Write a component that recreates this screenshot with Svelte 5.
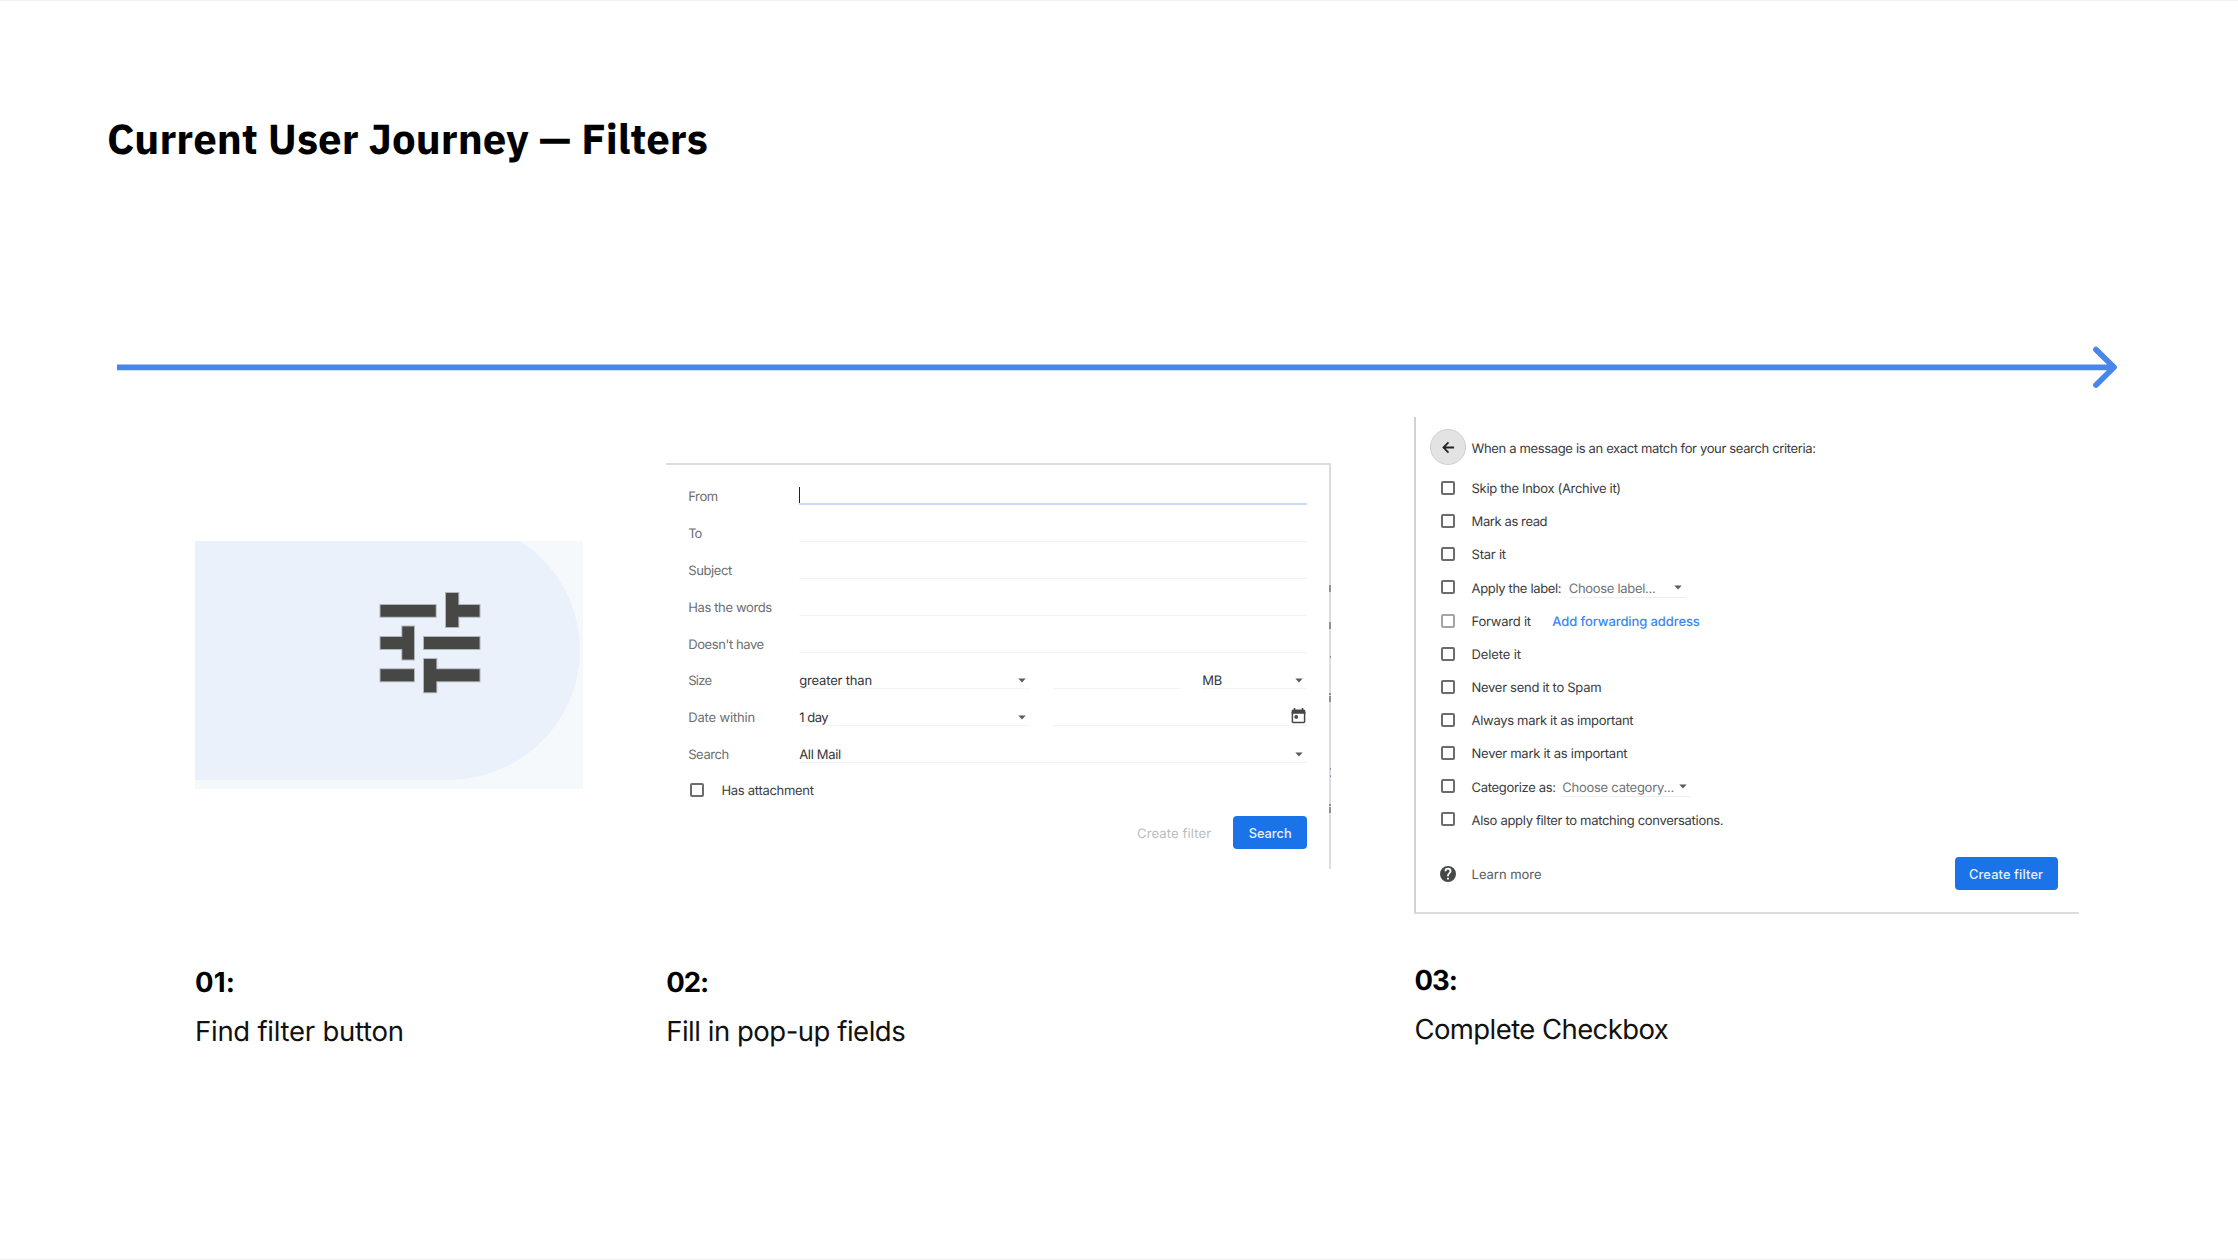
<script>
  // Spreads a line of text over a given width by adjusting its tracking.
  function fit(node, width) {
    const range = document.createRange();
    range.selectNodeContents(node);
    const natural = range.getBoundingClientRect().width;
    const gaps = node.textContent.length - 1;
    if (gaps > 0) node.style.letterSpacing = `${(width - natural) / gaps}px`;
  }

  const searchRows = [
    { label: 'From', w: 30, focus: true },
    { label: 'To', w: 14 },
    { label: 'Subject', w: 44 },
    { label: 'Has the words', w: 84 },
    { label: "Doesn't have", w: 76 },
    { label: 'Size', w: 24, value: 'greater than', vw: 73, kind: 'size' },
    { label: 'Date within', w: 67, value: '1 day', vw: 29.5, kind: 'date' },
    { label: 'Search', w: 41, value: 'All Mail', vw: 42, kind: 'scope' }
  ];

  const actions = [
    { text: 'Skip the Inbox (Archive it)', w: 149.5 },
    { text: 'Mark as read', w: 76 },
    { text: 'Star it', w: 34.5 },
    { text: 'Apply the label:', w: 90, choice: 'Choose label...', cw: 87, kind: 'label' },
    { text: 'Forward it', w: 59.5, link: 'Add forwarding address', lw: 147.5, off: true },
    { text: 'Delete it', w: 49.5 },
    { text: 'Never send it to Spam', w: 130 },
    { text: 'Always mark it as important', w: 162 },
    { text: 'Never mark it as important', w: 156 },
    { text: 'Categorize as:', w: 84.5, choice: 'Choose category...', cw: 112, kind: 'category' },
    { text: 'Also apply filter to matching conversations.', w: 252 }
  ];
</script>

{#snippet caret()}
  <svg class="caret" viewBox="0 0 8 5"><path d="M0.3 0.4h7.4L4 4.6z" /></svg>
{/snippet}

<main>
  <h1><span use:fit={601}>Current User Journey — Filters</span></h1>

  <svg class="timeline" viewBox="0 0 2004 48">
    <path d="M0 24.3H1996M1979 6.600L1997 24.300L1979 42" />
  </svg>

  <div class="steps">
    <section class="step">
      <div class="figure">
        <div class="crop">
          <div class="pill"></div>
          <svg class="tune" viewBox="0 0 388 248">
            <path d="M185.500 64h55.200v11.700h-55.200zM251 52h12.300v12h21.200v11.700h-21.200V86H251zM207.300 85.500H219v33h-11.700V108h-21.800V96h21.800zM229 96h55.500v12H229zM185.500 128.300H219v12h-33.500zM229 118h12.300v10.300h43.200v12h-43.200v11H229z" />
          </svg>
        </div>
      </div>
      <h2><span use:fit={40}>01:</span></h2>
      <p><span use:fit={209}>Find filter button</span></p>
    </section>

    <section class="step">
      <div class="figure">
        <div class="card search">
          {#each searchRows as row}
            <div class="row {row.kind ?? 'text'}">
              <span class="name"><span use:fit={row.w}>{row.label}</span></span>
              <div class="field main" class:focus={row.focus}>
                {#if row.focus}<i class="cursor"></i>{/if}
                {#if row.value}
                  <span use:fit={row.vw}>{row.value}</span>
                  {@render caret()}
                {/if}
              </div>
              {#if row.kind === 'size'}
                <div class="field amount"></div>
                <div class="field unit"><span use:fit={20}>MB</span>{@render caret()}</div>
              {:else if row.kind === 'date'}
                <div class="field day">
                  <svg class="calendar" viewBox="0 0 15 16">
                    <path class="line" d="M1.400 4V13.600a.9.9 0 0 0 .9.9H12.700a.9.9 0 0 0 .9-.9V4" />
                    <path d="M.6 5.800V3a1.600 1.600 0 0 1 1.600-1.600H2.700V0H4.300V1.400H10.700V0H12.300V1.400H12.800A1.600 1.600 0 0 1 14.400 3V5.800z" />
                    <circle cx="5.200" cy="8.900" r="1.900" />
                  </svg>
                </div>
              {/if}
            </div>
          {/each}
          <div class="attach">
            <i class="box"></i>
            <span use:fit={92.5}>Has attachment</span>
          </div>
          <div class="buttons">
            <span class="ghost"><span use:fit={74}>Create filter</span></span>
            <button class="go"><span use:fit={43}>Search</span></button>
          </div>
          <svg class="marks" viewBox="0 0 2 406">
            <path d="M0 122h2v7H0zM0 159h2v7H0zM1 193h1v2H1zM0 230h2v2H0zM0 233h2v6H0zM1 305h1v2H1zM1 312h1v2H1zM0 341h2v2H0zM0 344h2v6H0z" />
          </svg>
        </div>
      </div>
      <h2><span use:fit={43}>02:</span></h2>
      <p><span use:fit={239.5}>Fill in pop-up fields</span></p>
    </section>

    <section class="step last">
      <div class="figure">
        <div class="card actions">
          <header>
            <span class="back">
              <svg viewBox="0 0 14 14"><path d="M13 7H1.800M7 1.600L1.600 7L7 12.400" /></svg>
            </span>
            <span use:fit={344.5}>When a message is an exact match for your search criteria:</span>
          </header>
          <ul>
            {#each actions as a}
              <li>
                <i class="box" class:off={a.off}></i>
                <span use:fit={a.w}>{a.text}</span>
                {#if a.choice}
                  <div class="pick {a.kind}"><span use:fit={a.cw}>{a.choice}</span>{@render caret()}</div>
                {/if}
                {#if a.link}
                  <a href="#forwarding"><span use:fit={a.lw}>{a.link}</span></a>
                {/if}
              </li>
            {/each}
          </ul>
          <footer>
            <svg class="help" viewBox="0 0 24 24"><path d="M12 0a12 12 0 1 0 0 24 12 12 0 0 0 0-24zm1.300 20.200h-2.700v-2.700h2.700zm2.600-9.600l-1.200 1.200c-.9.9-1.400 1.700-1.400 3.600h-2.700v-.7c0-1.400.5-2.700 1.400-3.600l1.600-1.600c.5-.4.700-1 .7-1.700a2.400 2.400 0 0 0-4.800 0H6.800a5.200 5.200 0 0 1 10.400 0c0 1.100-.5 2.100-1.300 2.800z" /></svg>
            <span class="learn"><span use:fit={70}>Learn more</span></span>
            <button class="create"><span use:fit={74}>Create filter</span></button>
          </footer>
        </div>
      </div>
      <h2><span use:fit={43.5}>03:</span></h2>
      <p><span use:fit={254.5}>Complete Checkbox</span></p>
    </section>
  </div>
</main>

<style>
  :global(body) { background: #fff; }
  * { box-sizing: border-box; }
  main {
    width: 2238px; height: 1260px; overflow: hidden;
    display: flex; flex-direction: column;
    border-top: 1px solid #f1f1f1; border-bottom: 1px solid #f1f1f1;
    font-family: Inter, "Liberation Sans", sans-serif; color: #000;
    white-space: nowrap; text-rendering: geometricPrecision;
  }
  h1, h2, p, ul { margin: 0; padding: 0; }
  h1 {
    padding: 108px 0 0 107px; height: 342px;
    font: 700 42px/60px "IBM Plex Sans", "Noto Sans", sans-serif;
  }
  .timeline {
    width: 2004px; height: 48px; margin-left: 117px; flex: none;
    fill: none; stroke: #4a86e8; stroke-width: 5.700; stroke-linecap: round; stroke-linejoin: round;
  }
  .steps {
    display: grid; grid-template-columns: 388px 665px 665px; column-gap: 83.200px;
    padding: 26px 0 0 195px;
  }
  .figure { height: 497px; display: flex; align-items: center; }
  h2 { padding-top: 49px; font-size: 27.500px; line-height: 38px; font-weight: 700; }
  p { padding-top: 11px; font-size: 27.500px; line-height: 38px; color: #111; }
  .last h2 { padding-top: 47px; }
  .last p { padding-top: 10.500px; }

  .crop { position: relative; width: 388px; height: 248px; margin-bottom: 1px; background: #f5f9fc; overflow: hidden; }
  .pill { position: absolute; left: -200px; top: -21px; width: 585px; height: 260px; border-radius: 132px / 130px; background: #eaf1fb; }
  .tune { position: absolute; inset: 0; fill: #474846; stroke: rgb(71 72 70 / .35); stroke-width: 2; }

  .card { font: 400 13px/18px Inter, "Liberation Sans", sans-serif; color: #3a3b3d; width: 665px; }
  .search { position: relative; height: 406px; border: 2px solid #d9dce0; border-width: 2px 2px 0 0; padding: 4.200px 22px 0 22px; }
  .row { height: 36.800px; display: flex; align-items: flex-end; }
  .name { width: 111px; margin-bottom: -1px; color: #6c6e71; }
  .field { height: 22px; border-bottom: 1px solid #f4f4f5; display: flex; align-items: flex-end; justify-content: space-between; }
  .field > span { margin-bottom: -2px; color: #333436; }
  .main { flex: 1; }
  .size .main, .date .main { flex: none; width: 231px; margin-right: 22.500px; }
  .focus { border-bottom: 2px solid #c8dcfb; justify-content: flex-start; }
  .cursor { width: 1px; height: 16px; background: #222; }
  .amount { width: 127.500px; margin-right: 22px; }
  .unit { flex: 1; }
  .day { flex: 1; justify-content: flex-end; }
  .caret { width: 8px; height: 5px; fill: #5a5b5d; margin: 0 4px 5.500px 0; }
  .calendar { width: 15px; height: 16px; margin: 0 1.500px 1px 0; fill: #454648; }
  .line { fill: none; stroke: #454648; stroke-width: 1.500; }
  .box { width: 14px; height: 14px; border: 2px solid #6b6c6e; border-radius: 2px; flex: none; }
  .attach { display: flex; align-items: center; gap: 17px; padding: 18.200px 0 0 2.300px; color: #3c3d3f; }
  .attach span { position: relative; top: 1px; }
  .buttons { display: flex; justify-content: flex-end; align-items: center; gap: 22px; margin-top: 16.800px; }
  .ghost { color: #bbbcbe; padding-top: 2px; }
  button { border: 0; border-radius: 4px; background: #1a73e8; color: #e9f1fd; font: 500 12.800px/18px Inter, sans-serif; padding: 2px 0 0; height: 33px; text-align: center; }
  .go { width: 74px; }
  .marks { position: absolute; right: -2px; top: -2px; width: 2px; height: 406px; fill: #8f9194; }

  .actions { height: 497px; border-left: 2px solid #d2d2d3; border-bottom: 2px solid #dcddde; padding: 12.300px 21.800px 0 13.700px; }
  header { display: flex; align-items: center; gap: 5.500px; height: 36px; }
  .back { width: 36px; height: 36px; border-radius: 50%; background: #e3e3e3; border: 1px solid #cfcfcf; display: grid; place-items: center; }
  .back svg { width: 13px; height: 13px; fill: none; stroke: #222; stroke-width: 1.900; }
  header > span:last-child, li > span, li > a, .learn { position: relative; top: 1.300px; }
  ul { list-style: none; padding: 6px 0 0 11px; }
  li { height: 33.170px; display: flex; align-items: center; }
  li .box { margin-right: 16.500px; }
  .off { border-color: #a3a4a5; }
  .pick { display: flex; align-items: flex-end; justify-content: space-between; border-bottom: 1px solid #eee; height: 20px; margin: 0 0 -1.500px 7.500px; color: #707174; }
  .label { width: 117px; }
  .category { width: 129px; margin-left: 6.500px; }
  .pick span { margin-bottom: -.5px; }
  .pick .caret { margin-bottom: 7.200px; }
  a { margin-left: 21.500px; font-weight: 500; color: #3c86f2; text-decoration: none; }
  footer { display: flex; align-items: center; padding: 21px 0 0 10px; }
  .help { width: 16px; height: 16px; fill: #474849; margin-right: 15.500px; }
  .learn { color: #58595b; }
  .create { width: 103px; margin-left: auto; }
</style>
